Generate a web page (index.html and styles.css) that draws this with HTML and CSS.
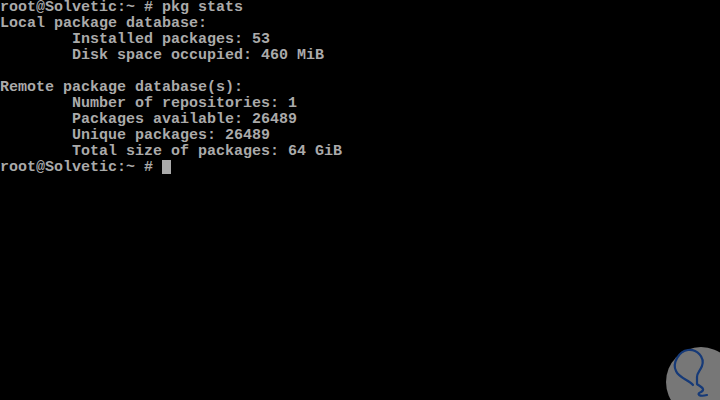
FILE: index.html
```html
<!DOCTYPE html>
<html>
<head>
    <title>pkg stats</title>
    <meta charset="UTF-8">
    <link rel="stylesheet" href="styles.css">
</head>
<body>
<div class="screen">
<pre class="term">root@Solvetic:~ # pkg stats
Local package database:
        Installed packages: 53
        Disk space occupied: 460 MiB

Remote package database(s):
        Number of repositories: 1
        Packages available: 26489
        Unique packages: 26489
        Total size of packages: 64 GiB
root@Solvetic:~ # <span class="cursor"></span></pre>

    <svg class="logo" width="72" height="72" viewBox="0 0 72 72">
        <circle cx="36" cy="36" r="35" fill="#777777"/>
        <path d="M28 39 C24 34 14 32 11 25 C7 17 14 5 23 4 C32 3 40 11 37 20 C35 25 32 27 32 31 L32 38 C36 41 41 43 36 46 C31 48 34 51 42 49"
              fill="none" stroke="#163a78" stroke-width="2.2" stroke-linecap="round" stroke-linejoin="round"/>
    </svg>
</div>
</body>
</html>
```

FILE: styles.css
```css
body {
    margin: 0;
    background-color: #000;
}
.screen {
    position: relative;
    width: 720px;
    height: 400px;
    overflow: hidden;
    background-color: #000;
}
.term {
    margin: 0;
    padding: 0;
    font-family: "Liberation Mono", "DejaVu Sans Mono", monospace;
    font-size: 15px;
    line-height: 16px;
    color: #aaaaaa;
    font-weight: bold;
}
.cursor {
    display: inline-block;
    width: 9px;
    height: 14px;
    background-color: #aaaaaa;
    vertical-align: -3px;
}
.logo {
    position: absolute;
    left: 665px;
    top: 346px;
}
```
